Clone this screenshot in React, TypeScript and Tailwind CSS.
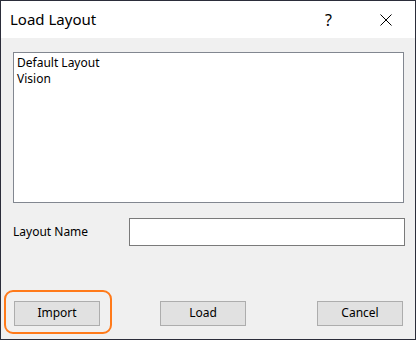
import React from 'react';

const font = { fontFamily: '"Noto Sans", "Open Sans", Arial, sans-serif' };

const DialogButton: React.FC<{ label: string }> = ({ label }) => (
  <button
    type="button"
    className="w-[86px] h-[25px] bg-[#e1e1e1] border border-[#adadad] text-[12px] text-black leading-none"
  >
    {label}
  </button>
);

export default function App() {
  return (
    <div className="w-[417px] h-[341px] bg-white" style={font}>
      <div className="w-[416px] h-[340px] border border-[#2b2d3a] flex flex-col">
        {/* Title bar */}
        <div className="h-[37px] bg-white flex items-center pl-[9px] shrink-0">
          <span className="text-[15px] text-black">Load Layout</span>
          <span className="ml-auto mr-[48px] text-[16px] text-black">?</span>
          <svg width="12" height="12" viewBox="0 0 12 12" className="mr-[23px]">
            <path d="M0.5 0.5 L11.5 11.5 M11.5 0.5 L0.5 11.5" stroke="#000" strokeWidth="1" />
          </svg>
        </div>

        {/* Body */}
        <div className="flex-1 bg-[#f0f0f0] flex flex-col pl-[12px] pt-[14px]">
          <div className="w-[391px] h-[151px] bg-white border border-[#828790] px-[3px] pt-[2px] text-[12px] leading-[16px] text-black">
            <div>Default Layout</div>
            <div>Vision</div>
          </div>

          <div className="flex items-center mt-[15px]">
            <span className="w-[116px] text-[12px] text-black">Layout Name</span>
            <div className="w-[276px] h-[28px] bg-white border border-[#7a7a7a]" />
          </div>

          <div className="flex mt-[53px] pl-[1px]">
            <div className="relative">
              <DialogButton label="Import" />
              <div className="absolute -left-[10px] -top-[9px] w-[108px] h-[44px] rounded-[9px] border-2 border-[#ff7a1a] pointer-events-none" />
            </div>
            <div className="ml-[60px]">
              <DialogButton label="Load" />
            </div>
            <div className="ml-[71px]">
              <DialogButton label="Cancel" />
            </div>
          </div>
        </div>
      </div>
    </div>
  );
}
